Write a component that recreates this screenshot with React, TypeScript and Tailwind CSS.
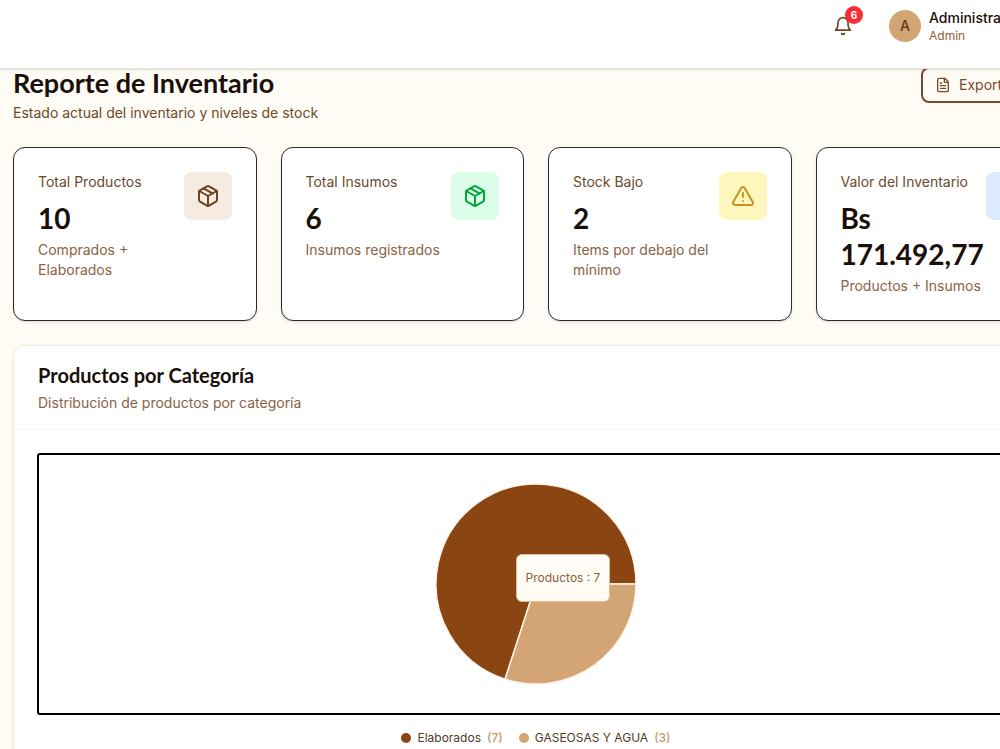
import type { ReactNode } from "react";
import { DollarSign, FileText, Package, TriangleAlert } from "lucide-react";

type Stat = {
  label: string;
  value: string;
  hint: string;
  icon: ReactNode;
  iconClass: string;
};

type Slice = {
  name: string;
  value: number;
  color: string;
};

const stats: Stat[] = [
  {
    label: "Total Productos",
    value: "10",
    hint: "Comprados + Elaborados",
    icon: <Package size={24} />,
    iconClass: "bg-[#f5ebe0] text-[#6b4423]",
  },
  {
    label: "Total Insumos",
    value: "6",
    hint: "Insumos registrados",
    icon: <Package size={24} />,
    iconClass: "bg-green-100 text-green-600",
  },
  {
    label: "Stock Bajo",
    value: "2",
    hint: "Items por debajo del mínimo",
    icon: <TriangleAlert size={24} />,
    iconClass: "bg-[#fdf6bd] text-[#c8901c]",
  },
  {
    label: "Valor del Inventario",
    value: "Bs 171.492,77",
    hint: "Productos + Insumos",
    icon: <DollarSign size={24} />,
    iconClass: "bg-blue-100 text-blue-600",
  },
];

const categories: Slice[] = [
  { name: "Elaborados", value: 7, color: "#8B4513" },
  { name: "GASEOSAS Y AGUA", value: 3, color: "#D4A574" },
];

function BellIcon() {
  return (
    <svg
      viewBox="0 0 24 24"
      width="20"
      height="20"
      fill="none"
      stroke="currentColor"
      strokeWidth="2"
      strokeLinecap="round"
      strokeLinejoin="round"
      aria-hidden="true"
    >
      <path d="M6 8a6 6 0 0 1 12 0c0 7 3 9 3 9H3s3-2 3-9" />
      <path d="M10.3 21a1.94 1.94 0 0 0 3.4 0" />
    </svg>
  );
}

function Header() {
  return (
    <header className="relative z-10 flex items-start justify-end gap-7 border-b border-[#ebe4dc] bg-white px-6 pt-2 pb-6 shadow-sm">
      <button type="button" aria-label="Notificaciones" className="relative flex h-9 w-9 items-center justify-center text-[#6b4a1f]">
        <BellIcon />
        <span className="absolute -top-0.5 -right-0.5 flex h-[18px] w-[18px] items-center justify-center rounded-full bg-[#fb2c36] text-[10px] font-bold text-white">
          6
        </span>
      </button>
      <button type="button" className="flex w-[159px] items-center gap-2 text-left">
        <span className="flex h-8 w-8 items-center justify-center rounded-full bg-[#d4a574] text-sm font-medium text-[#5c3a1c]">A</span>
        <span>
          <span className="block text-sm leading-5 font-medium text-[#1a0f0a]">Administrador</span>
          <span className="block text-xs leading-4 text-[#8b5e3c]">Admin</span>
        </span>
      </button>
    </header>
  );
}

function StatCard({ stat }: { stat: Stat }) {
  return (
    <article className="flex items-start justify-between rounded-xl border border-[#2b2b2b] bg-white p-6 shadow-sm">
      <div className="min-w-0 flex-1">
        <p className="text-sm text-[#6b4a2b]">{stat.label}</p>
        <p className="mt-2 font-[Lato] text-[28px] leading-9 font-bold text-[#1a0f0a]">{stat.value}</p>
        <p className="mt-1 text-sm text-[#8b6244]">{stat.hint}</p>
      </div>
      <div className={`flex h-12 w-12 shrink-0 items-center justify-center rounded-lg ${stat.iconClass}`}>{stat.icon}</div>
    </article>
  );
}

function CategoryPie({ data }: { data: Slice[] }) {
  const total = data.reduce((sum, item) => sum + item.value, 0);
  const radius = 100;
  let angle = 0;

  // slices run counterclockwise from three o'clock
  const paths = data.map((item) => {
    const start = angle;
    const end = start + (item.value / total) * Math.PI * 2;
    angle = end;
    const large = end - start > Math.PI ? 1 : 0;
    const x1 = radius * Math.cos(start);
    const y1 = -radius * Math.sin(start);
    const x2 = radius * Math.cos(end);
    const y2 = -radius * Math.sin(end);
    return (
      <path
        key={item.name}
        d={`M0 0 L${x1} ${y1} A${radius} ${radius} 0 ${large} 0 ${x2} ${y2} Z`}
        fill={item.color}
        stroke="#fff3e6"
        strokeWidth="1.5"
      />
    );
  });

  return (
    <svg viewBox="-101 -101 202 202" width="202" height="202" role="img" aria-label="Productos por categoría">
      {paths}
    </svg>
  );
}

export default function App() {
  return (
    <div className="h-screen overflow-hidden bg-[#fffcf5] font-[Inter,sans-serif]">
      <div className="min-w-[1072px]">
        <Header />
        <main className="-mt-0.5 flex flex-col gap-6 px-[13px]">
          <div className="flex items-start justify-between">
            <div>
              <h1 className="font-[Lato] text-[27px] leading-8 font-bold text-[#1a0f0a]">Reporte de Inventario</h1>
              <p className="mt-1 text-sm text-[#6b4a2b]">Estado actual del inventario y niveles de stock</p>
            </div>
            <button
              type="button"
              className="flex h-9 w-[138px] shrink-0 items-center gap-2 rounded-lg border-2 border-[#7a4a28] px-3 text-sm whitespace-nowrap text-[#7a4a28]"
            >
              <FileText size={16} className="shrink-0" />
              Exportar PDF
            </button>
          </div>

          <section className="grid grid-cols-4 gap-6">
            {stats.map((stat) => (
              <StatCard key={stat.label} stat={stat} />
            ))}
          </section>

          <section className="rounded-xl border border-[#f3ede4] bg-white shadow-sm">
            <div className="border-b border-gray-100 px-6 pt-[15px] pb-4">
              <h2 className="font-[Lato] text-xl font-bold text-[#1a0f0a]">Productos por Categoría</h2>
              <p className="mt-1 text-sm text-[#8b6244]">Distribución de productos por categoría</p>
            </div>
            <div className="p-6">
              <div className="flex h-[260px] items-center justify-center rounded-xs outline-2 -outline-offset-1 outline-black">
                <div className="relative">
                  <CategoryPie data={categories} />
                  <div className="absolute top-[71px] left-[81px] flex h-12 w-[94px] items-center justify-center rounded-md border border-[#e0bd98] bg-[#fffcf5] text-xs whitespace-nowrap text-[#8b5e3c]">
                    Productos : 7
                  </div>
                </div>
              </div>
              <ul className="mt-3.5 flex items-center justify-center gap-4 text-xs leading-5">
                {categories.map((item) => (
                  <li key={item.name} className="flex items-center gap-1.5">
                    <span className="h-2.5 w-2.5 rounded-full" style={{ backgroundColor: item.color }} />
                    <span className="text-[#4f3a28]">{item.name}</span>
                    <span className="font-medium text-[#c49a70]">({item.value})</span>
                  </li>
                ))}
              </ul>
            </div>
          </section>
        </main>
      </div>
    </div>
  );
}
